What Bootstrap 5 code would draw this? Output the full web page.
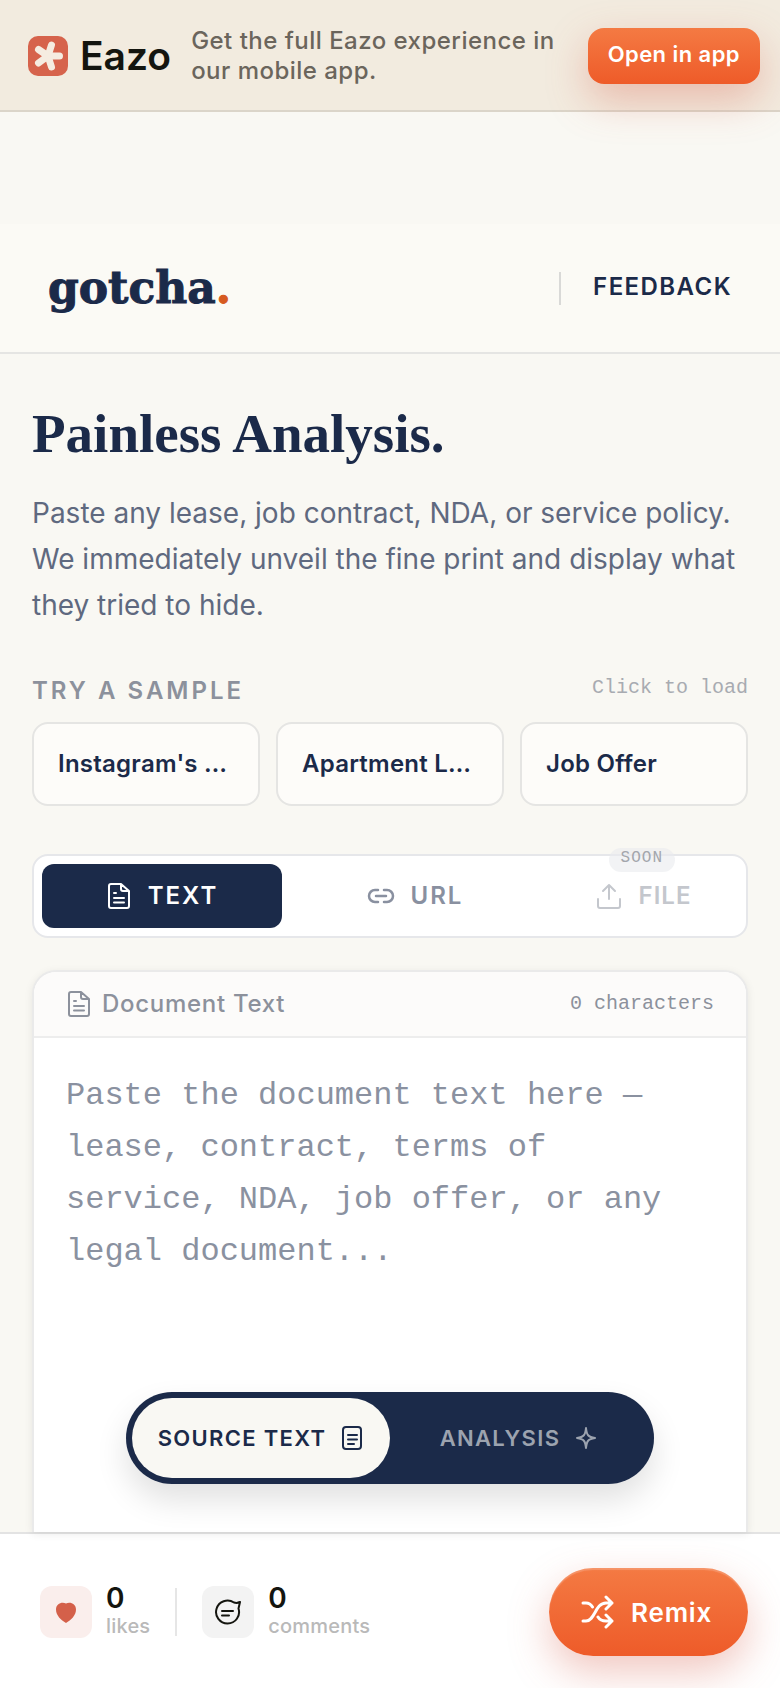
<!DOCTYPE html>
<html lang="en">
<head>
<meta charset="utf-8">
<meta name="viewport" content="width=device-width, initial-scale=1">
<title>gotcha.</title>
<link rel="stylesheet" href="https://cdn.jsdelivr.net/npm/bootstrap@5.3.0/dist/css/bootstrap.min.css">
<style>
  :root { --navy: #1b2a49; --line: #e5e5e3; --muted: #8a91a0; --cream: #f9f8f3; }
  body { font-family: Inter, "Liberation Sans", sans-serif; background: var(--cream); color: var(--navy); }
  svg { display: block; flex: none; fill: none; stroke: currentColor; stroke-width: 2; stroke-linecap: round; stroke-linejoin: round; }
  .bold-icon { stroke-width: 3; }
  .mono { font-family: "Liberation Mono", monospace; }
  .caps { letter-spacing: .06em; font-weight: 600; }
  .t20 { font-size: 20px; line-height: 24px; }
  .t22 { font-size: 22px; line-height: 28px; }
  .t24 { font-size: 24px; line-height: 30px; }

  .promo { background: #f2ebdf; border-bottom: 2px solid #dbd5c9; padding: 2px 20px 0 28px; height: 112px; }
  .promo-brand { font-size: 39px; line-height: 40px; font-weight: 600; color: #14150f; gap: 12px; }
  .promo-text { color: #6b655c; font-weight: 500; letter-spacing: .02em; padding: 0 20px; }
  .hot { border: 0; color: #fff; font-weight: 600; letter-spacing: .02em; background: linear-gradient(#f47a43, #ee5b29); box-shadow: 0 16px 40px #d85f4a59; }
  .promo-btn { border-radius: 16px; padding: 12px 20px 16px; }

  .site-head { margin-top: 112px; padding: 32px 48px; height: 130px; background: #fbfaf5; border-bottom: 2px solid var(--line); }
  .wordmark { font: 700 44px/64px "DejaVu Serif", serif; color: var(--navy); -webkit-text-stroke: 1px; }
  .wordmark span { color: #d65a20; }
  .feedback { border-left: 2px solid #d9d9d7; padding-left: 32px; line-height: 32px; }
  .feedback a { color: var(--navy); }

  .content { padding: 48px 32px 0; }
  .content h1 { font: 700 55px/64px "Liberation Serif", serif; margin-bottom: 24px; }
  .intro { font-size: 28px; line-height: 46px; color: #5f697f; margin-bottom: 48px; }
  .sample-label { letter-spacing: 3px; color: #8c919c; }
  .pale { color: #a8abb1; }
  .samples { display: grid; grid-template-columns: repeat(3, minmax(0, 1fr)); gap: 16px; margin: 16px 0 48px; }
  .sample { height: 84px; padding: 0 24px; border: 2px solid var(--line); border-radius: 16px; background: #fdfcf9; color: var(--navy); font-weight: 600; letter-spacing: .01em; text-align: left; }

  .modes { display: grid; grid-template-columns: 240fr 250fr 190fr; gap: 8px; padding: 8px; border: 2px solid #e6e7ea; border-radius: 16px; background: #fff; margin-bottom: 32px; }
  .mode { height: 64px; border: 0; border-radius: 12px; background: none; color: #8990a0; gap: 16px; letter-spacing: 2px; }
  .mode.on { background: var(--navy); color: #fff; }
  .mode:disabled { color: #c4c7cd; letter-spacing: 1px; }
  .soon { position: absolute; top: -16px; right: 63px; padding: 0 12px; border-radius: 12px; background: #e9ebef99; color: #a3a6ac; font-size: 16px; line-height: 20px; height: 24px; letter-spacing: 1px; font-weight: 400; }

  .doc { border: 2px solid #eaeaea; border-bottom: 0; border-radius: 24px 24px 0 0; background: #fff; box-shadow: 0 2px 8px #00000014; }
  .doc-head { height: 66px; padding: 0 32px; background: #fcfbfa; border-bottom: 2px solid #ededed; border-radius: 22px 22px 0 0; color: #8c919c; }
  .doc-head label { font-weight: 500; letter-spacing: .03em; gap: 10px; }
  .doc textarea { border: 0; resize: none; outline: 0; padding: 32px; font-size: 32px; line-height: 52px; background: none; }
  .doc textarea::placeholder { color: var(--muted); opacity: 1; }

  .view-switch { position: absolute; left: 50%; bottom: 48px; transform: translateX(-50%); width: 528px; padding: 6px; border-radius: 46px; background: var(--navy); box-shadow: 0 16px 32px #0000001f; }
  .view-switch button { height: 80px; border: 0; border-radius: 40px; background: none; color: #9ca3af; gap: 14px; }
  .view-switch .on { background: var(--cream); color: var(--navy); }

  .dock { background: #fff; border-top: 2px solid #e3e3e3; height: 156px; padding: 2px 32px 0 40px; }
  .stat { border: 0; padding: 0; background: none; gap: 14px; text-align: left; }
  .tile { width: 52px; height: 52px; border-radius: 12px; background: #f3f3f3; color: #14150f; }
  .tile.like { background: #faeeec; color: #d4604a; }
  .stat b { font-size: 28px; line-height: 28px; font-weight: 600; color: #14150f; }
  .stat small { font-size: 20px; line-height: 28px; font-weight: 500; color: #b9b9b9; letter-spacing: .01em; }
  .rule { width: 2px; height: 48px; background: #e6e6e6; margin: 0 25px; }
  .remix { height: 88px; border-radius: 44px; padding: 0 36px 0 32px; gap: 16px; font-size: 26px; letter-spacing: .03em; box-shadow: 0 16px 40px #d85f4a59, inset 0 2px 1px #ffffff33; }
</style>
</head>
<body>
<div class="vh-100 d-flex flex-column overflow-hidden">
  <aside class="promo d-flex align-items-center flex-shrink-0">
    <a href="#" class="promo-brand d-flex align-items-center text-decoration-none">
      <svg width="40" height="40" viewBox="0 0 40 40"><rect width="40" height="40" rx="10" fill="#d6634c" stroke="none"/><path d="M20 20H31.500M20 20l3.500 11M20 20l-9.500 7M20 20l-9.500-6.500M20 20l3.500-11" stroke="#f5ece1" stroke-width="7"/></svg>
      <span>Eazo</span>
    </a>
    <div class="promo-text t24 flex-grow-1">Get the full Eazo experience in our mobile app.</div>
    <button class="hot promo-btn t22 text-nowrap flex-shrink-0">Open in app</button>
  </aside>

  <header class="site-head d-flex align-items-center justify-content-between flex-shrink-0">
    <a href="#" class="wordmark text-decoration-none">gotcha<span>.</span></a>
    <div class="feedback"><a href="#" class="caps t24 text-decoration-none">FEEDBACK</a></div>
  </header>

  <main class="content flex-grow-1 d-flex flex-column position-relative">
    <h1>Painless Analysis.</h1>
    <p class="intro">Paste any lease, job contract, NDA, or service policy. We immediately unveil the fine print and display what they tried to hide.</p>

    <div class="d-flex justify-content-between">
      <span class="sample-label caps t24">TRY A SAMPLE</span>
      <span class="mono t20 pale">Click to load</span>
    </div>
    <div class="samples">
      <button class="sample t24 text-truncate">Instagram's Terms</button>
      <button class="sample t24 text-truncate">Apartment Lease</button>
      <button class="sample t24 text-truncate">Job Offer</button>
    </div>

    <div class="modes">
      <button class="mode on fw-semibold t24 d-flex align-items-center justify-content-center">
        <svg width="26" height="28" viewBox="0 0 26 28"><path d="M15 2H5a2 2 0 0 0-2 2v20a2 2 0 0 0 2 2h16a2 2 0 0 0 2-2V9zM15 2v5a2 2 0 0 0 2 2h6M8 11h2M8 16h10M8 20.500h10"/></svg>TEXT
      </button>
      <button class="mode fw-semibold t24 d-flex align-items-center justify-content-center">
        <svg width="28" height="28" viewBox="0 0 28 28"><path d="M11 8H8a6 6 0 0 0 0 12h3M17 8h3a6 6 0 0 1 0 12h-3M9 14h10" stroke-width="2.500"/></svg>URL
      </button>
      <button class="mode fw-semibold t24 d-flex align-items-center justify-content-center position-relative" disabled>
        <svg width="28" height="28" viewBox="0 0 28 28"><path d="M14 17V3M8 9l6-6 6 6M3 17v7a2 2 0 0 0 2 2h18a2 2 0 0 0 2-2v-7"/></svg>FILE
        <span class="soon mono">SOON</span>
      </button>
    </div>

    <section class="doc flex-grow-1 d-flex flex-column">
      <div class="doc-head d-flex align-items-center justify-content-between flex-shrink-0">
        <label for="source" class="t24 d-flex align-items-center">
          <svg width="26" height="28" viewBox="0 0 26 28"><path d="M15 2H5a2 2 0 0 0-2 2v20a2 2 0 0 0 2 2h16a2 2 0 0 0 2-2V9zM15 2v5a2 2 0 0 0 2 2h6M8 11h2M8 16h10M8 20.500h10"/></svg>Document Text
        </label>
        <span class="mono t20">0 characters</span>
      </div>
      <textarea id="source" class="mono w-100 flex-grow-1" placeholder="Paste the document text here — lease, contract, terms of service, NDA, job offer, or any legal document..."></textarea>
    </section>

    <div class="view-switch d-flex">
      <button class="on caps t22 w-50 d-flex align-items-center justify-content-center text-nowrap">SOURCE TEXT
        <svg width="24" height="28" viewBox="0 0 24 28"><path d="M6 3h12a3 3 0 0 1 3 3v16a3 3 0 0 1-3 3H6a3 3 0 0 1-3-3V6a3 3 0 0 1 3-3zM8 11h9M8 15.500h9M8 20h6"/></svg>
      </button>
      <button class="caps t22 w-50 d-flex align-items-center justify-content-center">ANALYSIS
        <svg width="24" height="28" viewBox="0 0 24 28"><path d="M12 4c.7 7 2 9 9 10-7 1-8.300 3-9 10-.7-7-2-9-9-10 7-1 8.300-3 9-10z"/></svg>
      </button>
    </div>
  </main>

  <footer class="dock d-flex align-items-center flex-shrink-0">
    <button class="stat d-flex align-items-center">
      <span class="tile like d-flex align-items-center justify-content-center"><svg width="22" height="22" viewBox="0 0 22 22"><path d="M11 22C6 19 1 14.500 1 8.500 1 2.500 7 .5 11 2.500c4-2 10 0 10 6S16 19 11 22z" fill="currentColor" stroke="none"/></svg></span>
      <span class="d-flex flex-column"><b>0</b><small>likes</small></span>
    </button>
    <span class="rule"></span>
    <button class="stat d-flex align-items-center">
      <span class="tile d-flex align-items-center justify-content-center"><svg width="28" height="28" viewBox="0 0 28 28"><path d="M20 4.500A11.500 11.500 0 1 0 24.500 10.500L26 4c-2 1-4 1.200-6 .5zM8 13h11M8 17.500h7"/></svg></span>
      <span class="d-flex flex-column"><b>0</b><small>comments</small></span>
    </button>
    <button class="hot remix ms-auto d-flex align-items-center">
      <svg class="bold-icon" width="34" height="34" viewBox="0 0 34 34"><path d="M2 8h3c3 0 5 1.500 6.500 4M2 26h3c9 0 9-18 20-18h6M17 22c1.500 2.500 4 4 8 4h6M25 2l6 6-6 6M25 20l6 6-6 6"/></svg>Remix
    </button>
  </footer>
</div>
<script src="https://cdn.jsdelivr.net/npm/bootstrap@5.3.0/dist/js/bootstrap.bundle.min.js"></script>
</body>
</html>
